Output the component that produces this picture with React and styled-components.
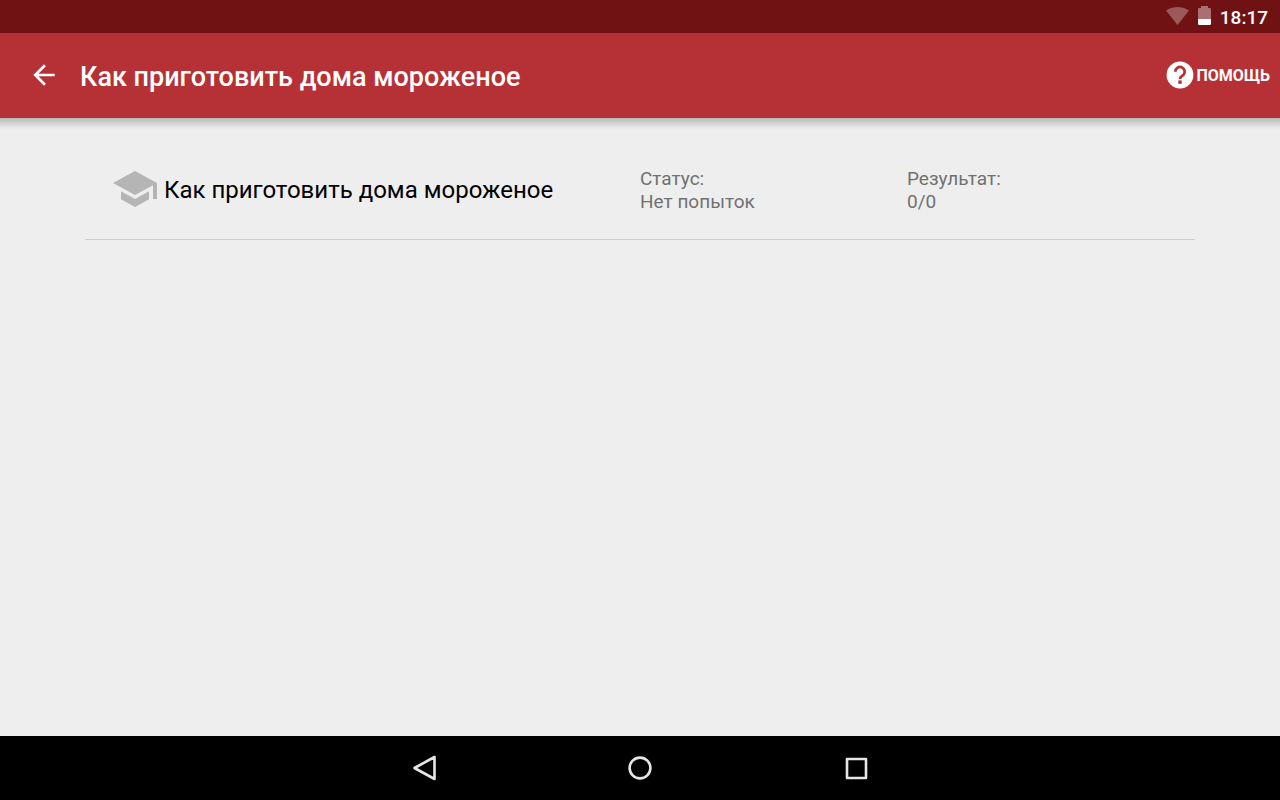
import React from "react";
import styled, { createGlobalStyle } from "styled-components";

const GlobalStyle = createGlobalStyle`
  * {
    box-sizing: border-box;
  }

  body {
    margin: 0;
    background-color: #eeeeee;
    font-family: Roboto, sans-serif;
  }
`;

const Screen = styled.div`
  display: flex;
  flex-direction: column;
  min-height: 100vh;
`;

const StatusBar = styled.div`
  display: flex;
  align-items: center;
  justify-content: flex-end;
  gap: 9px;
  height: 33px;
  padding: 0 12px 2px;
  background-color: #701214;
  color: #ffffff;
`;

const Clock = styled.time`
  font-size: 19px;
  font-weight: 500;
  line-height: 24px;
  padding-top: 4px;
`;

const AppBar = styled.header`
  display: flex;
  align-items: center;
  height: 85px;
  padding: 0 10px 1px 28px;
  background-color: #b63136;
  color: #ffffff;
`;

const BarButton = styled.button`
  display: flex;
  align-items: center;
  padding: 0;
  border: 0;
  background: none;
  color: inherit;
  font-family: inherit;
  cursor: pointer;
`;

const BarLabel = styled.span`
  padding-top: 2px;
  font-size: 16px;
  font-weight: 700;
  line-height: 24px;
`;

const Title = styled.h1`
  flex: 1;
  margin: 0 20px;
  font-size: 27px;
  font-weight: 500;
  line-height: 32px;
  padding-top: 4px;
`;

const Content = styled.main`
  flex: 1;
  padding: 21px 85px;
  background: linear-gradient(#b9b9b9, #eeeeee) 0 0 / 100% 11px no-repeat;
`;

const List = styled.ul`
  margin: 0;
  padding: 0;
  list-style: none;
`;

const Row = styled.li`
  display: grid;
  grid-template-columns: 2fr 1fr 1fr;
  align-items: center;
  height: 101px;
  padding: 0 21px;
  border-bottom: 1px solid #d0d0d0;
`;

const Course = styled.div`
  display: flex;
  align-items: center;
  gap: 5px;
  padding-left: 5px;
`;

const CourseName = styled.span`
  padding-top: 2px;
  color: #000000;
  font-size: 24px;
  line-height: 32px;
`;

const Info = styled.div`
  padding-top: 2px;
  color: #717171;
  font-size: 19px;
  line-height: 23px;
`;

const NavBar = styled.nav`
  display: flex;
  align-items: center;
  justify-content: center;
  gap: 184px;
  height: 64px;
  background-color: #000000;
  color: #e6e6e6;
`;

const Icon = styled.svg`
  display: block;
  flex: none;
  width: ${({ $size }) => $size}px;
  height: ${({ $size }) => $size}px;
  fill: ${({ $color }) => $color || "currentColor"};
`;

const NavButton = styled.button`
  padding: 0;
  border: 0;
  background: none;
  color: inherit;
  cursor: pointer;
`;

const NavIcon = styled(Icon)`
  fill: none;
  stroke: currentColor;
  stroke-width: 2.6;
  stroke-linejoin: round;
`;

const StatusIcon = styled.svg`
  display: block;
  fill: #ffffff;
`;

const courses = [
  {
    name: "Как приготовить дома мороженое",
    status: "Нет попыток",
    result: "0/0"
  }
];

const App = () => {
  return (
    <>
      <GlobalStyle />
      <Screen>
        <StatusBar>
          <StatusIcon width="23" height="18" viewBox="0 0 23 18">
            <path
              opacity="0.3"
              d="M11.5 18 23 3.6C22.5 3.3 18.2 0 11.5 0S.5 3.3 0 3.6z"
            />
          </StatusIcon>
          <StatusIcon width="13" height="19" viewBox="0 0 13 19">
            <path opacity="0.4" d="M0 13V3.2Q0 2 1.2 2H3V0h7v2h1.8Q13 2 13 3.2V13z" />
            <path d="M0 13h13v4.8q0 1.2-1.2 1.2H1.2Q0 19 0 17.8z" />
          </StatusIcon>
          <Clock>18:17</Clock>
        </StatusBar>
        <AppBar>
          <BarButton type="button" aria-label="Назад">
            <Icon $size={32} viewBox="0 0 24 24">
              <path d="M20 11H7.83l5.59-5.59L12 4l-8 8 8 8 1.41-1.41L7.83 13H20v-2z" />
            </Icon>
          </BarButton>
          <Title>Как приготовить дома мороженое</Title>
          <BarButton type="button">
            <Icon $size={32} viewBox="0 0 32 32">
              <circle cx="16" cy="16" r="13.4" />
              <path
                d="M11.3 12.7a4.7 4.7 0 1 1 8.2 3.1C17.9 17.3 16 17.6 16 20"
                fill="none"
                stroke="#b63136"
                strokeWidth="2.8"
              />
              <path d="M14.3 21.4h3.4v3.4h-3.4z" fill="#b63136" />
            </Icon>
            <BarLabel>ПОМОЩЬ</BarLabel>
          </BarButton>
        </AppBar>
        <Content>
          <List>
            {courses.map(course => {
              return (
                <Row key={course.name}>
                  <Course>
                    <Icon $size={48} $color="#b5b5b5" viewBox="0 0 24 24">
                      <path d="M5 13.18v4L12 21l7-3.82v-4L12 17l-7-3.82zM12 3L1 9l11 6 9-4.91V17h2V9L12 3z" />
                    </Icon>
                    <CourseName>{course.name}</CourseName>
                  </Course>
                  <Info>
                    Статус:
                    <br />
                    {course.status}
                  </Info>
                  <Info>
                    Результат:
                    <br />
                    {course.result}
                  </Info>
                </Row>
              );
            })}
          </List>
        </Content>
        <NavBar>
          <NavButton type="button" aria-label="Назад">
            <NavIcon $size={32} viewBox="0 0 32 32">
              <path d="M6.5 16 26.5 5v22z" />
            </NavIcon>
          </NavButton>
          <NavButton type="button" aria-label="Домой">
            <NavIcon $size={32} viewBox="0 0 32 32">
              <circle cx="16" cy="16" r="10.4" />
            </NavIcon>
          </NavButton>
          <NavButton type="button" aria-label="Обзор">
            <NavIcon $size={32} viewBox="0 0 32 32">
              <rect x="7" y="7" width="19" height="19" />
            </NavIcon>
          </NavButton>
        </NavBar>
      </Screen>
    </>
  );
};

export default App;
